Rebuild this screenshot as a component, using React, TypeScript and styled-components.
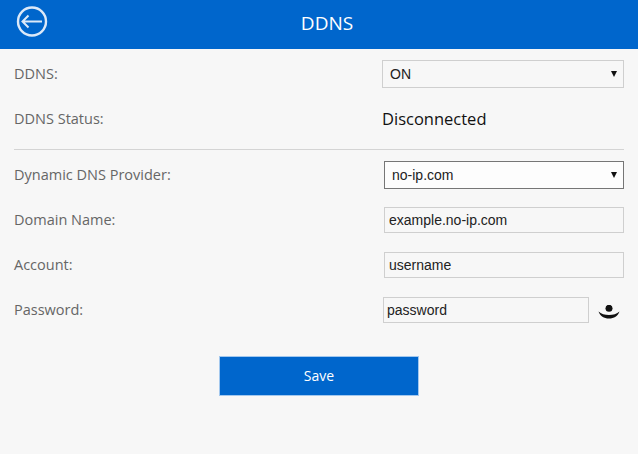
import React from "react";
import styled, { createGlobalStyle } from "styled-components";

const GlobalStyle = createGlobalStyle`
  html, body {
    margin: 0;
    padding: 0;
    background: #f7f7f7;
  }
`;

const App: React.FC = () => {
  return (
    <>
      <GlobalStyle />
      <Page>
        <Header>
          <BackButton aria-label="Back">
            <svg width="32" height="32" viewBox="0 0 32 32" fill="none" stroke="#dce9f8" strokeWidth="2.4">
              <circle cx="16" cy="15.500" r="14" />
              <path d="M26 15.500H6M12.500 9.500l-6 6 6 6" strokeWidth="2" />
            </svg>
          </BackButton>
          <Title>DDNS</Title>
        </Header>

        <Form>
          <Row $height={28} $top={11}>
            <Label>DDNS:</Label>
            <SelectBox $left={382}>
              <Select defaultValue="ON">
                <option>ON</option>
                <option>OFF</option>
              </Select>
              <Arrow />
            </SelectBox>
          </Row>

          <Row $height={28} $top={17}>
            <Label>DDNS Status:</Label>
            <Status>Disconnected</Status>
          </Row>

          <Divider />

          <Row $height={28} $top={11}>
            <Label>Dynamic DNS Provider:</Label>
            <SelectBox $left={384}>
              <Select defaultValue="no-ip.com" $active>
                <option>no-ip.com</option>
                <option>dyndns.org</option>
              </Select>
              <Arrow />
            </SelectBox>
          </Row>

          <Row $height={26} $top={18}>
            <Label>Domain Name:</Label>
            <Input defaultValue="example.no-ip.com" />
          </Row>

          <Row $height={26} $top={19}>
            <Label>Account:</Label>
            <Input defaultValue="username" />
          </Row>

          <Row $height={26} $top={19}>
            <Label>Password:</Label>
            <PasswordInput defaultValue="password" />
            <EyeButton aria-label="Show password">
              <svg width="22" height="14" viewBox="0 0 22 14" fill="#111">
                <circle cx="11" cy="3.300" r="3.500" />
                <path d="M.5 6.500C3 9 7 10 11 10s8-1 10.500-3.500C20 11 16 13.500 11 13.500S2 11 .5 6.500z" />
              </svg>
            </EyeButton>
          </Row>

          <Actions>
            <SaveButton>Save</SaveButton>
          </Actions>
        </Form>
      </Page>
    </>
  );
};

export default App;

const Arrow = () => (
  <ArrowIcon width="6" height="6" viewBox="0 0 6 6" fill="#111">
    <path d="M0 0h6L3 6z" />
  </ArrowIcon>
);

const Page = styled.div`
  width: 638px;
  height: 454px;
  overflow: hidden;
  background: #f7f7f7;
  font-family: "Open Sans", "Noto Sans", sans-serif;
`;

const Header = styled.header`
  position: relative;
  height: 49px;
  padding-left: 16px;
  background: #0066cc;
  display: flex;
  align-items: center;
  justify-content: center;
`;

const BackButton = styled.button`
  position: absolute;
  left: 16px;
  top: 6px;
  width: 32px;
  height: 32px;
  padding: 0;
  border: none;
  background: none;
`;

const Title = styled.h1`
  margin: 0 0 2px;
  font-size: 19px;
  font-weight: 400;
  color: #fff;
  line-height: 47px;
`;

const Form = styled.main`
  padding: 0 14px;
`;

const Row = styled.div<{ $height: number; $top: number }>`
  display: flex;
  align-items: center;
  height: ${(p) => p.$height}px;
  margin-top: ${(p) => p.$top}px;
`;

const Label = styled.label`
  flex: 0 0 auto;
  padding-bottom: 2px;
  font-size: 14.500px;
  color: #666;
`;

const SelectBox = styled.div<{ $left: number }>`
  position: relative;
  margin-left: auto;
  width: ${(p) => 624 - p.$left}px;
  height: 100%;
`;

const Select = styled.select<{ $active?: boolean }>`
  appearance: none;
  box-sizing: border-box;
  width: 100%;
  height: 100%;
  padding: 0 7px;
  border: 1px solid ${(p) => (p.$active ? "#767676" : "#cfcfcf")};
  border-radius: 0;
  background: ${(p) => (p.$active ? "#fdfdfd" : "#f7f7f7")};
  font-family: "Liberation Sans", Arial, sans-serif;
  font-size: 14px;
  color: #222;
  outline: none;
`;

const ArrowIcon = styled.svg`
  position: absolute;
  right: 7px;
  top: 11px;
  pointer-events: none;
`;

const Status = styled.span`
  margin-left: auto;
  margin-bottom: 2px;
  width: 242px;
  font-size: 16.500px;
  color: #111;
`;

const Divider = styled.hr`
  margin: 16px 0 0;
  border: none;
  border-top: 1px solid #d4d4d4;
`;

const Input = styled.input`
  box-sizing: border-box;
  margin-left: auto;
  width: 240px;
  height: 100%;
  padding: 0 4px;
  border: 1px solid #cfcfcf;
  border-radius: 0;
  background: #f7f7f7;
  font-family: "Liberation Sans", Arial, sans-serif;
  font-size: 14px;
  color: #222;
  outline: none;
`;

const PasswordInput = styled(Input)`
  width: 206px;
  padding: 0 3px;
`;

const EyeButton = styled.button`
  flex: 0 0 auto;
  display: flex;
  margin-left: 9px;
  margin-right: 4px;
  padding: 0;
  border: none;
  background: none;
  position: relative;
  top: 2px;
`;

const Actions = styled.div`
  display: flex;
  justify-content: center;
  margin-top: 33px;
`;

const SaveButton = styled.button`
  box-sizing: border-box;
  width: 200px;
  height: 40px;
  padding: 0 0 2px;
  border: 1px solid #a3c8ee;
  background: #0066cc;
  color: #fff;
  font-family: "Open Sans", "Noto Sans", sans-serif;
  font-size: 14px;
`;
